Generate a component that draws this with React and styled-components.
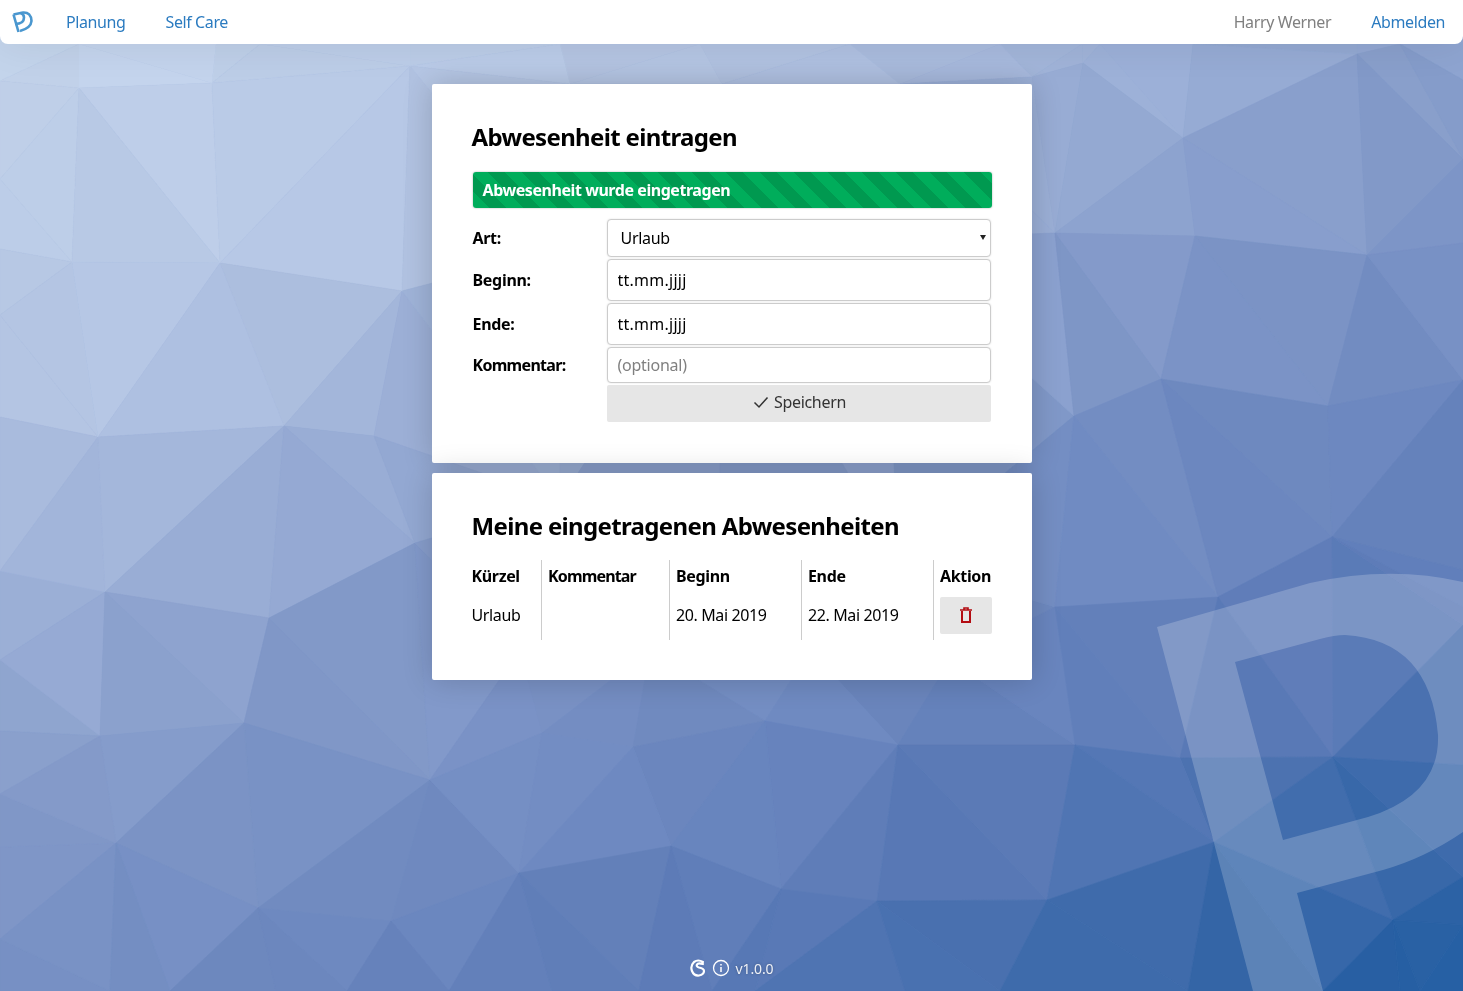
import React from "react";
import styled, { createGlobalStyle } from "styled-components";

const FONT = '"Noto Sans", "Open Sans", sans-serif';

const Global = createGlobalStyle`
  html, body { margin: 0; padding: 0; height: 100%; }
  body { font-family: ${FONT}; font-size: 16px; color: #000; background: #7f98c8; }
  * { box-sizing: border-box; }
`;

const POINTS = [
  [0,0],[1463,0],[0,44],[79,44],[216,44],[260,44],[410,44],[560,44],[700,44],[850,44],[1000,44],[1082,44],[1100,44],[1193,44],[1357,44],[1400,44],[1463,44],
  [0,81],[0,179],[0,249],[0,315],[0,417],[0,571],[0,660],[0,731],[0,794],[0,847],[0,939],[0,991],
  [79,88],[212,83],[410,66],[72,262],[220,263],[402,291],[98,437],[284,426],[374,436],[105,592],[269,618],[415,543],[244,723],[100,736],[430,780],[116,843],[258,908],[391,921],
  [570,84],[722,84],[900,84],[560,250],[720,260],[880,240],[560,500],[720,560],[900,560],[520,650],[650,650],[810,650],[950,660],
  [542,733],[633,747],[765,721],[898,745],[671,846],[519,873],[781,889],[877,901],
  [1032,77],[1083,63],[1183,138],[1357,54],[1055,233],[1195,236],[1367,255],[1161,379],[1328,406],[1074,416],[1332,537],[1218,597],[1055,607],[1180,758],[1333,757],[1075,745],[1214,842],[1047,900],[1393,920],
  [1463,80],[1463,159],[1463,243],[1463,380],[1463,570],[1463,607],[1463,625],[1463,765],[1463,877],[1463,925],[1463,991],
  [110,991],[170,991],[276,991],[347,991],[449,991],[552,991],[639,991],[712,991],[755,991],[905,991],[1000,991],[1188,991],[1323,991],[1400,991],[1420,991],
];

function delaunay(pts) {
  const all = pts.concat([[-20000,-20000],[30000,-20000],[1000,30000]]);
  const n = pts.length;
  const circ = (t) => {
    const [a,b,c] = t.map((i) => all[i]);
    const d = 2*(a[0]*(b[1]-c[1])+b[0]*(c[1]-a[1])+c[0]*(a[1]-b[1]));
    const A = a[0]*a[0]+a[1]*a[1], B = b[0]*b[0]+b[1]*b[1], C = c[0]*c[0]+c[1]*c[1];
    const x = (A*(b[1]-c[1])+B*(c[1]-a[1])+C*(a[1]-b[1]))/d;
    const y = (A*(c[0]-b[0])+B*(a[0]-c[0])+C*(b[0]-a[0]))/d;
    return { x, y, r: (a[0]-x)**2+(a[1]-y)**2 };
  };
  let tris = [[n,n+1,n+2]].map((t) => ({ t, c: circ(t) }));
  for (let i = 0; i < n; i++) {
    const [px,py] = all[i];
    const bad = [], good = [];
    tris.forEach((o) => ((px-o.c.x)**2+(py-o.c.y)**2 < o.c.r ? bad : good).push(o));
    const edges = new Map();
    bad.forEach(({ t }) => {
      [[t[0],t[1]],[t[1],t[2]],[t[2],t[0]]].forEach(([u,v]) => {
        const k = u < v ? `${u}_${v}` : `${v}_${u}`;
        edges.set(k, edges.has(k) ? null : [u,v]);
      });
    });
    tris = good;
    edges.forEach((e) => {
      if (!e) return;
      const t = [e[0],e[1],i];
      const [a,b,c] = t.map((j) => all[j]);
      if (Math.abs((b[0]-a[0])*(c[1]-a[1])-(b[1]-a[1])*(c[0]-a[0])) < 1e-6) return;
      tris.push({ t, c: circ(t) });
    });
  }
  return tris.filter((o) => o.t.every((j) => j < n)).map((o) => o.t.map((j) => all[j]));
}

const STOPS = [[200,216,238],[178,195,226],[130,153,201],[94,124,184],[31,91,160]];
function colourFor(tri) {
  const x = (tri[0][0]+tri[1][0]+tri[2][0])/3;
  const y = (tri[0][1]+tri[1][1]+tri[2][1])/3;
  const t = Math.min(0.999, x/1463*0.42 + y/991*0.58);
  const f = t*4, i = Math.floor(f), k = f-i;
  const j = (Math.sin(x*12.9898+y*78.233)*43758.5453 % 1)*2.5;
  return `rgb(${STOPS[i].map((v,c) => Math.round(v+(STOPS[i+1][c]-v)*k+j)).join(",")})`;
}
const TRIANGLES = delaunay(POINTS).map((t) => ({ d: t.map((p) => p.join(",")).join(" "), fill: colourFor(t) }));

const Backdrop = styled.svg`
  position: fixed;
  inset: 0;
  width: 100vw;
  height: 100vh;
  z-index: -1;
`;

const Page = styled.div`
  min-height: 100vh;
  display: flex;
  flex-direction: column;
  align-items: center;
`;

const Nav = styled.nav`
  width: 100%;
  height: 44px;
  flex: none;
  background: #fff;
  border-radius: 0 0 8px 8px;
  display: flex;
  align-items: center;
  padding: 0 18px 0 11px;
  gap: 40px;
  box-shadow: 0 0 40px rgba(0,0,0,.08);
`;

const NavLink = styled.a`
  font-size: 16px;
  letter-spacing: ${(p) => (p.$muted ? "-0.37px" : "-0.4px")};
  color: ${(p) => (p.$muted ? "#808080" : "#2b7bc0")};
  text-decoration: none;
  margin-left: ${(p) => (p.$push ? "auto" : 0)};
`;

const LogoMark = styled.svg`
  width: 24px;
  height: 24px;
  margin-right: -9px;
`;

const Card = styled.section`
  width: 600px;
  background: #fff;
  padding: 40px 40px ${(p) => p.$bottom}px;
  border-radius: 2px;
  box-shadow: 0 0 30px rgba(0,0,0,.18);
  margin-top: ${(p) => p.$top}px;
`;

const Title = styled.h2`
  margin: 0 0 ${(p) => p.$gap}px;
  font-size: 24px;
  line-height: 26px;
  font-weight: 700;
  letter-spacing: -0.65px;
`;

const Alert = styled.div`
  height: 36px;
  border-radius: 3px;
  display: flex;
  align-items: center;
  padding: 0 10px;
  color: #fff;
  font-weight: 700;
  font-size: 16px;
  letter-spacing: -0.44px;
  box-shadow: 0 0 2px rgba(0,0,0,.35);
  background: repeating-linear-gradient(45deg, #00ad5b 0 12px, #009950 12px 24px);
  margin: 0 0 11px 1px;
`;

const FormGrid = styled.form`
  display: grid;
  grid-template-columns: 134px 384px;
  row-gap: 2px;
  align-items: center;
  margin-left: 1px;
`;

const Label = styled.label`
  font-weight: 700;
  font-size: 16px;
  letter-spacing: ${(p) => (p.$tight ? "-0.7px" : "-0.3px")};
`;

const SelectWrap = styled.div`
  position: relative;
  height: 38px;
  &::after {
    content: "";
    position: absolute;
    right: 5px;
    top: 16px;
    border-left: 3px solid transparent;
    border-right: 3px solid transparent;
    border-top: 5px solid #222;
    pointer-events: none;
  }
`;

const Select = styled.select`
  appearance: none;
  height: 38px;
  width: 100%;
  font: 16px ${FONT};
  letter-spacing: -0.3px;
  color: #000;
  background: #fff;
  border: 1px solid #ccc;
  border-radius: 4px;
  padding: 0 0 0 13px;
  box-shadow: 0 0 2px rgba(0,0,0,.12);
`;

const Input = styled.input`
  height: ${(p) => p.$h}px;
  width: 100%;
  font: 16px ${FONT};
  letter-spacing: ${(p) => (p.$spaced ? "0.25px" : "-0.25px")};
  color: #000;
  background: #fff;
  border: 1px solid #ccc;
  border-radius: 4px;
  padding: 0 10px;
  box-shadow: 0 0 2px rgba(0,0,0,.12);
  &::placeholder { color: #808080; opacity: 1; }
`;

const SaveButton = styled.button`
  grid-column: 2;
  height: 37px;
  background: #e6e6e6;
  border: 0;
  border-radius: 2px;
  display: flex;
  align-items: center;
  justify-content: center;
  gap: 5px;
  padding: 0 0 3px 2px;
  font: 16px ${FONT};
  letter-spacing: -0.3px;
  color: #333;
`;

const Table = styled.table`
  width: 520px;
  border-collapse: collapse;
  table-layout: fixed;
`;

const Th = styled.th`
  width: ${(p) => p.$w}px;
  height: 36px;
  padding: 0 0 4px ${(p) => (p.$first ? 0 : 6)}px;
  text-align: left;
  font-weight: 700;
  font-size: 16px;
  letter-spacing: ${(p) => (p.$tight ? "-0.85px" : "-0.35px")};
  border-left: ${(p) => (p.$first ? "0" : "1px solid #ccc")};
`;

const Td = styled.td`
  height: 44px;
  padding: 0 0 6px ${(p) => (p.$first ? 0 : 6)}px;
  font-size: 16px;
  letter-spacing: -0.38px;
  border-left: ${(p) => (p.$first ? "0" : "1px solid #ccc")};
  white-space: nowrap;
`;

const DeleteButton = styled.button`
  width: 52px;
  height: 37px;
  display: flex;
  align-items: center;
  justify-content: center;
  background: #e6e6e6;
  border: 0;
  border-radius: 2px;
  padding: 0;
`;

const Footer = styled.footer`
  margin-top: auto;
  height: 44px;
  display: flex;
  align-items: center;
  gap: 5px;
  color: rgba(255,255,255,.9);
  font-size: 14px;
  text-shadow: 0 0 3px rgba(0,0,0,.3);
  padding-bottom: 2px;
`;

const FooterIcon = styled.svg`
  width: ${(p) => p.$s}px;
  height: ${(p) => p.$s}px;
`;

const VersionText = styled.span`
  letter-spacing: -0.1px;
`;

export default function App() {
  return (
    <>
      <Global />
      <Backdrop viewBox="0 0 1463 991" preserveAspectRatio="none" aria-hidden="true">
        {TRIANGLES.map((t, i) => (
          <polygon key={i} points={t.d} fill={t.fill} stroke={t.fill} strokeWidth="0.6" />
        ))}
        <path
          fill="#fff"
          fillOpacity="0.2"
          fillRule="evenodd"
          d="M1157 627 L1310 583 Q1390 565 1463 582 L1463 832 Q1425 858 1383 870 L1297 893 L1323 991 L1253 991 Z M1235 662 L1283 840 L1368 817 Q1440 795 1438 735 Q1430 640 1345 635 Q1335 635 1320 639 Z"
        />
      </Backdrop>
      <Page>
        <Nav>
          <LogoMark viewBox="0 0 24 24" fill="none" stroke="#4a97cf" strokeWidth="2.6">
            <path d="M2.5 4.5 L12 2.5 Q20 2 20.5 11 Q20 18 9 21" />
            <path d="M2.5 4.5 L7.5 22" />
            <path d="M4 14 Q13 14 13 7.5 Q13 4 9.5 3" />
          </LogoMark>
          <NavLink href="#">Planung</NavLink>
          <NavLink href="#">Self Care</NavLink>
          <NavLink $muted $push>Harry Werner</NavLink>
          <NavLink href="#">Abmelden</NavLink>
        </Nav>

        <Card $top={40} $bottom={41}>
          <Title $gap={22}>Abwesenheit eintragen</Title>
          <Alert>Abwesenheit wurde eingetragen</Alert>
          <FormGrid>
            <Label>Art:</Label>
            <SelectWrap>
              <Select defaultValue="Urlaub"><option>Urlaub</option></Select>
            </SelectWrap>
            <Label>Beginn:</Label>
            <Input $h={42} $spaced defaultValue="tt.mm.jjjj" />
            <Label>Ende:</Label>
            <Input $h={42} $spaced defaultValue="tt.mm.jjjj" />
            <Label $tight>Kommentar:</Label>
            <Input $h={36} placeholder="(optional)" />
            <SaveButton type="button">
              <svg width="16" height="16" viewBox="0 0 16 16" fill="none" stroke="#333" strokeWidth="1.5"><path d="M1.5 8.5 L6 13 L14.5 3.5" /></svg>
              Speichern
            </SaveButton>
          </FormGrid>
        </Card>

        <Card $top={10} $bottom={40}>
          <Title $gap={21}>Meine eingetragenen Abwesenheiten</Title>
          <Table>
            <thead>
              <tr>
                <Th $first $w={70}>Kürzel</Th>
                <Th $w={128} $tight>Kommentar</Th>
                <Th $w={132}>Beginn</Th>
                <Th $w={132}>Ende</Th>
                <Th $w={58}>Aktion</Th>
              </tr>
            </thead>
            <tbody>
              <tr>
                <Td $first>Urlaub</Td>
                <Td></Td>
                <Td>20. Mai 2019</Td>
                <Td>22. Mai 2019</Td>
                <Td>
                  <DeleteButton type="button" aria-label="Löschen">
                    <svg width="14" height="16" viewBox="0 0 14 16" fill="none" stroke="#b30c12" strokeWidth="2"><path d="M1 3 H13 M5 3 V1 H9 V3" strokeWidth="1.6" /><path d="M3 4 V15 H11 V4" /></svg>
                  </DeleteButton>
                </Td>
              </tr>
            </tbody>
          </Table>
        </Card>

        <Footer>
          <FooterIcon $s={18} viewBox="0 0 18 18" fill="none" stroke="#fff" strokeWidth="2.2" strokeLinecap="round">
            <path d="M14 3 Q9 0 5 3 Q1 7 3 12 Q5 17 10 16.5 Q15 15.5 15 12 Q15 9.5 10 8.5 Q7 7.5 8 5.5 Q9 3.5 14 5" />
          </FooterIcon>
          <FooterIcon $s={18} viewBox="0 0 18 18" fill="none" stroke="#fff" strokeWidth="1.3">
            <circle cx="9" cy="9" r="7.5" />
            <path d="M9 8 V13 M9 5 V6.4" strokeWidth="1.5" />
          </FooterIcon>
          <VersionText>v1.0.0</VersionText>
        </Footer>
      </Page>
    </>
  );
}
